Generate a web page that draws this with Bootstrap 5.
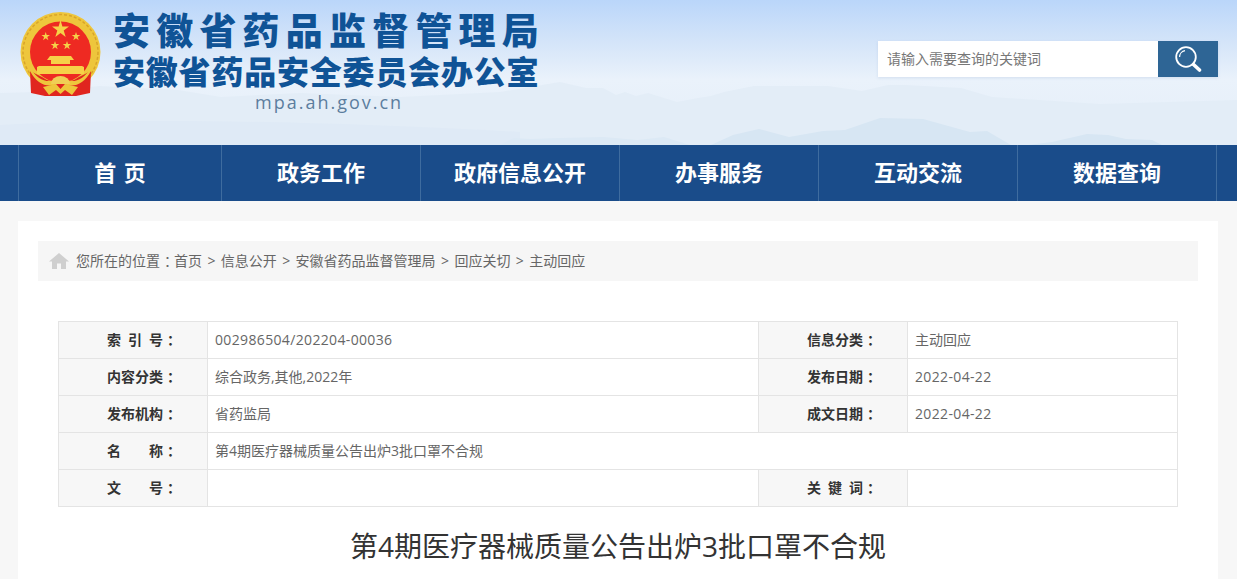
<!DOCTYPE html>
<html lang="zh-CN">
<head>
    <meta charset="UTF-8">
    <meta name="viewport" content="width=device-width, initial-scale=1.0">
    <title>第4期医疗器械质量公告出炉3批口罩不合规</title>
    <link rel="stylesheet" href="https://cdn.jsdelivr.net/npm/bootstrap@5.3.0/dist/css/bootstrap.min.css">
    <style>
        body { font-family: "Open Sans", "Noto Sans CJK SC", sans-serif; background: #f7f7f7; color: #666; font-size: 14px; }
        /* full width colon, centred in its square */
        .mid-colon { display: inline-block; padding-left: 4px; margin-right: -4px; }

        /* header */
        .site-head { height: 145px; position: relative; background: linear-gradient(#bad6fa 0, #d5e5f9 30%, #eaf2fb 55%, #e4eef8 100%); }
        .head-bg { position: absolute; left: 0; top: 0; width: 100%; height: 145px; }
        .head-inner { position: relative; padding-left: 18px; padding-right: 19px; height: 145px; }
        .emblem { width: 88px; height: 100px; margin-top: 5px; margin-right: 7px; flex: none; }
        .head-title { color: #0f5396; font-weight: 900; white-space: nowrap; }
        .title-one { font-size: 37px; line-height: 40px; letter-spacing: 6.2px; margin-top: 11px; }
        .title-two { font-size: 32px; line-height: 38px; letter-spacing: .8px; margin-top: 2px; }
        .title-url { font-family: "Open Sans", sans-serif; font-weight: 400; font-size: 18px; line-height: 22px; letter-spacing: 2px; color: #5b7d9e; margin-left: 142px; margin-top: 0; }
        .search-box { margin-top: 41px; height: 36px; width: 340px; box-shadow: 0 1px 3px rgba(120, 150, 190, .2); }
        .search-box input { width: 280px; height: 36px; border: 0; border-radius: 0; background: #fff; padding: 0 9px 2px; font-size: 14px; color: #666; }
        .search-box input::placeholder { color: #777; opacity: 1; }
        .search-btn { width: 60px; height: 36px; border: 0; border-radius: 0; background: #2e6595; padding: 0; }
        .search-btn svg { width: 28px; height: 28px; }

        /* main nav */
        .main-menu { height: 56px; background: #1a4c8a; padding: 0 20px 0 18px; }
        .main-menu .menu-cell { width: 199px; height: 56px; line-height: 54px; padding: 0; text-align: center; color: #fff; font-size: 22px; font-weight: 700; border-left: 1px solid #3f6c9f; }
        .main-menu .menu-cell.first { width: 203px; word-spacing: 2px; }
        .main-menu .menu-cell.last { width: 200px; border-right: 1px solid #3f6c9f; }

        /* content */
        .page-card { background: #fff; margin: 20px 19px 0 18px; padding: 20px 20px 0; }
        .crumb-bar { height: 40px; background: #f6f6f6; padding-left: 11px; gap: 7px; }
        .crumb-bar svg { width: 20px; height: 18px; flex: none; }
        .crumb-bar .breadcrumb { --bs-breadcrumb-divider: ">"; --bs-breadcrumb-margin-bottom: 0; --bs-breadcrumb-divider-color: #666; --bs-breadcrumb-item-padding-x: 5.4px; --bs-breadcrumb-item-active-color: #666; font-size: 14px; line-height: 20px; }
        .crumb-bar a { color: #666; text-decoration: none; }
        .info-wrap { padding: 40px 20px 0; }
        .info-table { table-layout: fixed; width: 1119px; margin: 0; --bs-table-border-color: #e4e4e4; font-size: 14px; }
        .info-table th, .info-table td { height: 37px; padding: 0 7px; vertical-align: middle; line-height: 20px; }
        .info-table th { background: #f7f7f7; color: #333; font-weight: 700; text-align: left; padding-left: 48px; }
        .info-table td { color: #666; }
        .num-text { letter-spacing: .35px; }
        .gap-s { letter-spacing: 7px; }
        .gap-w { letter-spacing: 28px; }
        .doc-title { font-size: 28px; line-height: 40px; color: #333; font-weight: 400; text-align: center; margin: 19px 0 0; }
    </style>
</head>
<body class="vh-100 overflow-hidden d-flex flex-column">

    <!-- Header -->
    <header class="site-head flex-shrink-0">
        <svg class="head-bg" viewBox="0 0 1237 145" preserveAspectRatio="none">
            <path d="M0 93 L36 92 L100 86 L178 90 L221 97 L300 93 L400 97 L500 92 L560 82 L586 88 L603 88 L616 95 L625 92 L636 96 L648 93 L677 102 L698 98 L711 96 L724 92 L754 86 L828 86 L862 91 L888 85 L905 85 L961 88 L992 97 L1100 104 L1237 100 V145 H0Z" fill="#e3edf7"/>
            <path d="M0 145 V125 C120 118 300 120 520 132 V145Z" fill="#dfeaf6"/>
            <path d="M500 145 L514 138 L530 139 L560 138 L603 137 L638 140 L664 137 L690 145Z" fill="#dce9f5"/>
            <path d="M711 145 L733 135 L759 129 L789 137 L823 131 L845 130 L880 118 L923 119 L970 132 L987 131 L1011 145Z" fill="#d7e6f3"/>
            <path d="M1028 145 L1052 142 L1087 134 L1108 135 L1126 139 L1152 140 L1162 145Z" fill="#d7e6f3"/>
        </svg>
        <div class="head-inner d-flex justify-content-between">
            <div class="d-flex">
                <svg class="emblem" viewBox="0 0 88 100">
                    <!-- ring centre sits at 42,47 in this box -->
                    <circle cx="42.5" cy="47" r="40" fill="#eec63c"/>
                    <circle cx="42.5" cy="47" r="37.5" fill="none" stroke="#d9a52a" stroke-width="1.5" stroke-dasharray="3 2"/>
                    <circle cx="42.5" cy="47" r="30.5" fill="#ee2a22"/>
                    <polygon fill="#f6d148" points="42.5,15 44.4,21.6 51,21.6 45.7,25.6 47.7,32 42.5,28.1 37.3,32 39.3,25.6 34,21.6 40.6,21.6"/>
                    <polygon fill="#f6d148" points="27.7,27 28.7,30.1 32,30.1 29.3,32 30.4,35.2 27.7,33.2 25,35.2 26.1,32 23.4,30.1 26.7,30.1"/>
                    <polygon fill="#f6d148" points="58,27 59,30.1 62.3,30.1 59.6,32 60.7,35.2 58,33.2 55.3,35.2 56.4,32 53.7,30.1 57,30.1"/>
                    <polygon fill="#f6d148" points="37,36 38,39.1 41.3,39.1 38.6,41 39.7,44.2 37,42.2 34.3,44.2 35.4,41 32.7,39.1 36,39.1"/>
                    <polygon fill="#f6d148" points="49,36 50,39.1 53.3,39.1 50.6,41 51.7,44.2 49,42.2 46.3,44.2 47.4,41 44.7,39.1 48,39.1"/>
                    <path d="M32 51 H53 L56 55 H52 V59 H33 V55 H29Z" fill="#f6d148"/>
                    <path d="M19 62 L21 61 H64 L66 62 V69 H19Z" fill="#f6d148"/>
                    <!-- red drape, covers the foot of the ring -->
                    <path d="M12 66 L24 72 C30 76 36 78 42.5 78 C49 78 55 76 61 72 L73 66 L72 88 L58 91 H27 L13 88Z" fill="#e0261f"/>
                    <!-- gold ribbon and centre fan -->
                    <path d="M12 63 C20 76 32 80 42.5 72 C53 80 65 76 73 63 L73 66 C65 81 53 84 42.5 77 C32 84 20 81 12 66Z" fill="#eec63c"/>
                    <path d="M33 79 A9.5 8 0 0 1 52 79Z" fill="#f0cf55"/>
                    <path d="M25 82 L38 79 L42.5 84 L47 79 L60 82 L54 90 L47 85 L42.5 89 L38 85 L31 90Z" fill="#eec63c"/>
                </svg>
                <div class="head-title">
                    <div class="title-one">安徽省药品监督管理局</div>
                    <div class="title-two">安徽省药品安全委员会办公室</div>
                    <div class="title-url">mpa.ah.gov.cn</div>
                </div>
            </div>
            <form class="search-box d-flex">
                <input type="text" class="form-control shadow-none" placeholder="请输入需要查询的关键词">
                <button type="button" class="search-btn btn d-flex align-items-center justify-content-center" aria-label="搜索">
                    <svg viewBox="0 0 28 28" fill="none" stroke="#fff">
                        <circle cx="12" cy="12" r="9.8" stroke-width="1.8"/>
                        <path d="M5.6 12 A6.4 6.4 0 0 1 11 5.7" stroke-width="1.2"/>
                        <path d="M19.5 19.5 L25.5 25" stroke-width="3.6" stroke-linecap="round"/>
                    </svg>
                </button>
            </form>
        </div>
    </header>

    <!-- Main navigation -->
    <nav class="main-menu nav flex-nowrap flex-shrink-0">
        <a class="menu-cell first nav-link" href="#">首 页</a>
        <a class="menu-cell nav-link" href="#">政务工作</a>
        <a class="menu-cell nav-link" href="#">政府信息公开</a>
        <a class="menu-cell nav-link" href="#">办事服务</a>
        <a class="menu-cell nav-link" href="#">互动交流</a>
        <a class="menu-cell last nav-link" href="#">数据查询</a>
    </nav>

    <main class="page-card flex-grow-1">
        <!-- Breadcrumb -->
        <div class="crumb-bar d-flex align-items-center">
            <svg viewBox="0 0 20 18" fill="#cfcfcf"><path d="M10 1 L20 9.5 H17 V17 H12 V11.5 H8 V17 H3 V9.5 H0Z"/></svg>
            <ol class="breadcrumb">
                <li class="breadcrumb-item">您所在的位置<span class="mid-colon">：</span><a href="#">首页</a></li>
                <li class="breadcrumb-item"><a href="#">信息公开</a></li>
                <li class="breadcrumb-item"><a href="#">安徽省药品监督管理局</a></li>
                <li class="breadcrumb-item"><a href="#">回应关切</a></li>
                <li class="breadcrumb-item active">主动回应</li>
            </ol>
        </div>

        <!-- Document info -->
        <div class="info-wrap">
            <table class="info-table table table-bordered">
                <colgroup>
                    <col style="width:149px"><col style="width:551px"><col style="width:149px"><col style="width:270px">
                </colgroup>
                <tr>
                    <th><span class="gap-s">索引</span>号<span class="mid-colon">：</span></th><td class="num-text">002986504/202204-00036</td>
                    <th>信息分类<span class="mid-colon">：</span></th><td>主动回应</td>
                </tr>
                <tr>
                    <th>内容分类<span class="mid-colon">：</span></th><td>综合政务,其他,2022年</td>
                    <th>发布日期<span class="mid-colon">：</span></th><td class="num-text">2022-04-22</td>
                </tr>
                <tr>
                    <th>发布机构<span class="mid-colon">：</span></th><td>省药监局</td>
                    <th>成文日期<span class="mid-colon">：</span></th><td class="num-text">2022-04-22</td>
                </tr>
                <tr>
                    <th><span class="gap-w">名</span>称<span class="mid-colon">：</span></th><td colspan="3">第4期医疗器械质量公告出炉3批口罩不合规</td>
                </tr>
                <tr>
                    <th><span class="gap-w">文</span>号<span class="mid-colon">：</span></th><td></td>
                    <th><span class="gap-s">关键</span>词<span class="mid-colon">：</span></th><td></td>
                </tr>
            </table>
            <h1 class="doc-title">第4期医疗器械质量公告出炉3批口罩不合规</h1>
        </div>
    </main>

    <script src="https://cdn.jsdelivr.net/npm/bootstrap@5.3.0/dist/js/bootstrap.bundle.min.js"></script>
</body>
</html>
